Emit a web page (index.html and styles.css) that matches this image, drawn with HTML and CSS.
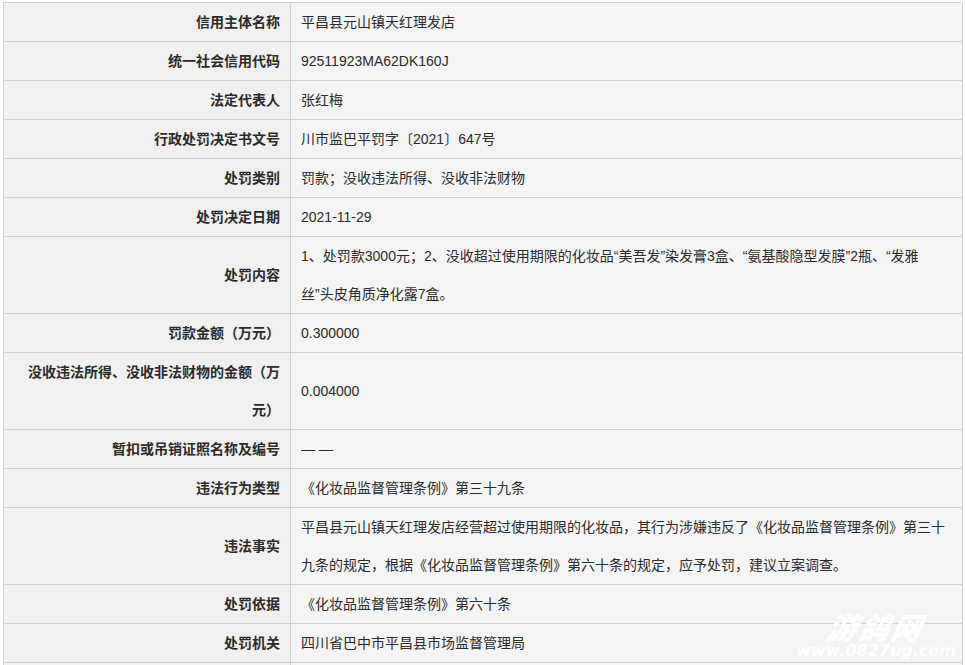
FILE: index.html
```html
<!DOCTYPE html>
<html lang="zh-CN">
<head>
<meta charset="utf-8">
<title>行政处罚信息</title>
<link rel="stylesheet" href="styles.css">
</head>
<body>
<div class="page">
<table class="info">
<tbody>
<tr><th>信用主体名称</th><td>平昌县元山镇天红理发店</td></tr>
<tr><th>统一社会信用代码</th><td>92511923MA62DK160J</td></tr>
<tr><th>法定代表人</th><td>张红梅</td></tr>
<tr><th>行政处罚决定书文号</th><td>川市监巴平罚字〔2021〕647号</td></tr>
<tr><th>处罚类别</th><td>罚款；没收违法所得、没收非法财物</td></tr>
<tr><th>处罚决定日期</th><td>2021-11-29</td></tr>
<tr><th>处罚内容</th><td>1、处罚款3000元；2、没收超过使用期限的化妆品“美吾发”染发膏3盒、“氨基酸隐型发膜”2瓶、“发雅<br>丝”头皮角质净化露7盒。</td></tr>
<tr><th>罚款金额（万元）</th><td>0.300000</td></tr>
<tr><th>没收违法所得、没收非法财物的金额（万元）</th><td>0.004000</td></tr>
<tr><th>暂扣或吊销证照名称及编号</th><td>— —</td></tr>
<tr><th>违法行为类型</th><td>《化妆品监督管理条例》第三十九条</td></tr>
<tr><th>违法事实</th><td>平昌县元山镇天红理发店经营超过使用期限的化妆品，其行为涉嫌违反了《化妆品监督管理条例》第三十九条的规定，根据《化妆品监督管理条例》第六十条的规定，应予处罚，建议立案调查。</td></tr>
<tr><th>处罚依据</th><td>《化妆品监督管理条例》第六十条</td></tr>
<tr><th>处罚机关</th><td>四川省巴中市平昌县市场监督管理局</td></tr>
<tr><th>&nbsp;</th><td>&nbsp;</td></tr>
</tbody>
</table>
<div class="watermark">
<div class="wm-name">游鸽网</div>
<div class="wm-url">www.0827ug.com</div>
</div>
</div>
</body>
</html>
```

FILE: styles.css
```css
html, body {
  margin: 0;
  padding: 0;
  background: #ffffff;
}
.page {
  padding: 2px 0 0 3px;
  height: 663px;
  overflow: hidden;
  position: relative;
}
.info {
  border-collapse: collapse;
  width: 960px;
  table-layout: fixed;
  font-family: "Liberation Sans", "Noto Sans CJK SC", sans-serif;
  font-size: 14px;
  color: #2b2b2b;
}
.info th,
.info td {
  border: 1px solid #d2d2d2;
  line-height: 38px;
  padding: 0 10px;
  vertical-align: middle;
}
.info th {
  width: 266px;
  background: #f0f0f0;
  text-align: right;
  font-weight: bold;
}
.info td {
  background: #f4f4f4;
  text-align: left;
  font-weight: normal;
}
.watermark {
  position: absolute;
  right: 6px;
  bottom: 5px;
  width: 166px;
  color: rgba(255, 255, 255, 0.95);
  font-family: "Noto Sans CJK SC", sans-serif;
  font-style: italic;
  font-weight: 900;
  text-align: center;
}
.wm-name {
  font-size: 30px;
  line-height: 32px;
  letter-spacing: 2px;
  transform: skewX(-12deg);
}
.wm-url {
  font-family: "DejaVu Sans", sans-serif;
  font-weight: bold;
  font-size: 16px;
  line-height: 18px;
  white-space: nowrap;
}
```
